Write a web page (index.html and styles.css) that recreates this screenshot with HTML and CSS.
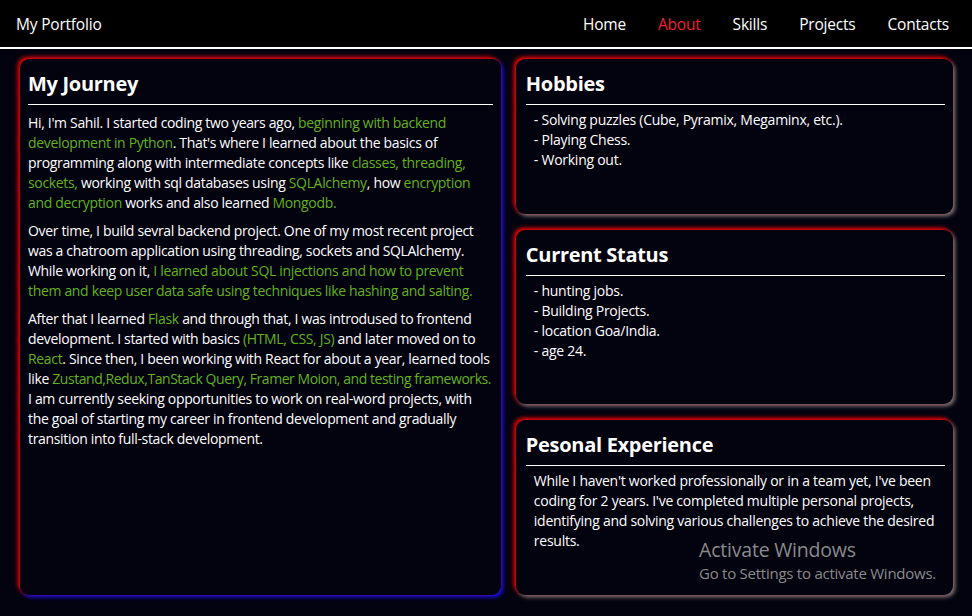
FILE: index.html
```html
<!DOCTYPE html>
<html lang="en">
<head>
<meta charset="utf-8">
<title>My Portfolio</title>
<link rel="stylesheet" href="styles.css">
</head>
<body>
<nav class="nav">
  <div class="brand">My Portfolio</div>
  <ul class="links">
    <li>Home</li>
    <li class="active">About</li>
    <li>Skills</li>
    <li>Projects</li>
    <li>Contacts</li>
  </ul>
</nav>
<main class="main">
  <section class="card card-journey">
    <h2 class="title">My Journey</h2>
    <p>Hi, I'm Sahil. I started coding two years ago, <span class="g">beginning with backend development in Python</span>. That's where I learned about the basics of programming along with intermediate concepts like <span class="g">classes, threading, sockets,</span> working with sql databases using <span class="g">SQLAlchemy</span>, how <span class="g">encryption and decryption</span> works and also learned <span class="g">Mongodb.</span></p>
    <p>Over time, I build sevral backend project. One of my most recent project was a chatroom application using threading, sockets and SQLAlchemy. While working on it, <span class="g">I learned about SQL injections and how to prevent them and keep user data safe using techniques like hashing and salting.</span></p>
    <p>After that I learned <span class="g">Flask</span> and through that, I was introdused to frontend development. I started with basics <span class="g">(HTML, CSS, JS)</span> and later moved on to <span class="g">React</span>. Since then, I been working with React for about a year, learned tools like <span class="g tools">Zustand,Redux,TanStack Query, Framer Moion, and testing frameworks.</span> I am currently seeking opportunities to work on real-word projects, with the goal of starting my career in frontend development and gradually transition into full-stack development.</p>
  </section>
  <div class="side">
    <section class="card card-side">
      <h2 class="title">Hobbies</h2>
      <ul class="list">
        <li>- Solving puzzles (Cube, Pyramix, Megaminx, etc.).</li>
        <li>- Playing Chess.</li>
        <li>- Working out.</li>
      </ul>
    </section>
    <section class="card card-side">
      <h2 class="title">Current Status</h2>
      <ul class="list">
        <li>- hunting jobs.</li>
        <li>- Building Projects.</li>
        <li>- location Goa/India.</li>
        <li>- age 24.</li>
      </ul>
    </section>
    <section class="card card-side">
      <h2 class="title">Pesonal Experience</h2>
      <p class="exp">While I haven't worked professionally or in a team yet, I've been coding for 2 years. I've completed multiple personal projects, identifying and solving various challenges to achieve the desired results.</p>
    </section>
  </div>
</main>
<div class="activate">
  <div class="act-title">Activate Windows</div>
  <div class="act-sub">Go to Settings to activate Windows.</div>
</div>
</body>
</html>
```

FILE: styles.css
```css
* { box-sizing: border-box; }
html, body { margin: 0; padding: 0; }
body {
  background: #03020f;
  color: #fff;
  font-family: "Open Sans", "Noto Sans", sans-serif;
  height: 616px;
  overflow: hidden;
}
.nav {
  height: 49px;
  background: #000;
  border-bottom: 2px solid #fff;
  display: flex;
  align-items: center;
  justify-content: space-between;
  padding: 0 23px 0 16px;
}
.brand { font-size: 15.5px; letter-spacing: -0.2px; }
.links {
  list-style: none;
  margin: 0;
  padding: 0;
  display: flex;
  gap: 32px;
  font-size: 15.5px;
  letter-spacing: -0.2px;
}
.links .active { color: #f0222b; }
.main {
  height: 567px;
  padding: 10px 19px 21px 20px;
  display: grid;
  grid-template-columns: 1.1fr 1fr;
  column-gap: 15px;
}
.card {
  background: #03020f;
  border-radius: 9px;
  padding: 8px;
}
.card-journey {
  box-shadow: -2px -2px 4px #ff0000, 2px 2px 4px #1a10ff;
}
.card-side {
  box-shadow: -2px -2px 4px #ff0000, 2px 2px 4px #8a8080;
  flex: 1 1 auto;
  padding: 8px 8px 8px 10px;
}
.side {
  display: flex;
  flex-direction: column;
  gap: 16px;
}
.title {
  margin: 0;
  padding: 3px 0 7px 0;
  font-size: 20px;
  line-height: 27px;
  font-weight: 700;
  border-bottom: 1px solid #fff;
  letter-spacing: -0.3px;
}
.card p {
  margin: 8px 0 0 0;
  font-size: 14px;
  line-height: 20px;
  letter-spacing: -0.33px;
}
.card-journey p + p { margin-top: 8px; }
.g { color: #62b31a; }
.g.tools { letter-spacing: -0.45px; }
.list {
  list-style: none;
  margin: 5px 0 0 0;
  padding: 0 0 0 8px;
  font-size: 14px;
  line-height: 20px;
  letter-spacing: -0.26px;
}
.card .exp { margin: 5px 0 0 0; padding-left: 8px; letter-spacing: -0.26px; }
.activate {
  position: absolute;
  left: 699px;
  top: 538px;
  color: #8b8b8b;
}
.act-title { font-size: 19.5px; line-height: 24px; letter-spacing: -0.2px; }
.act-sub { font-size: 15px; line-height: 22px; letter-spacing: -0.25px; }
```
